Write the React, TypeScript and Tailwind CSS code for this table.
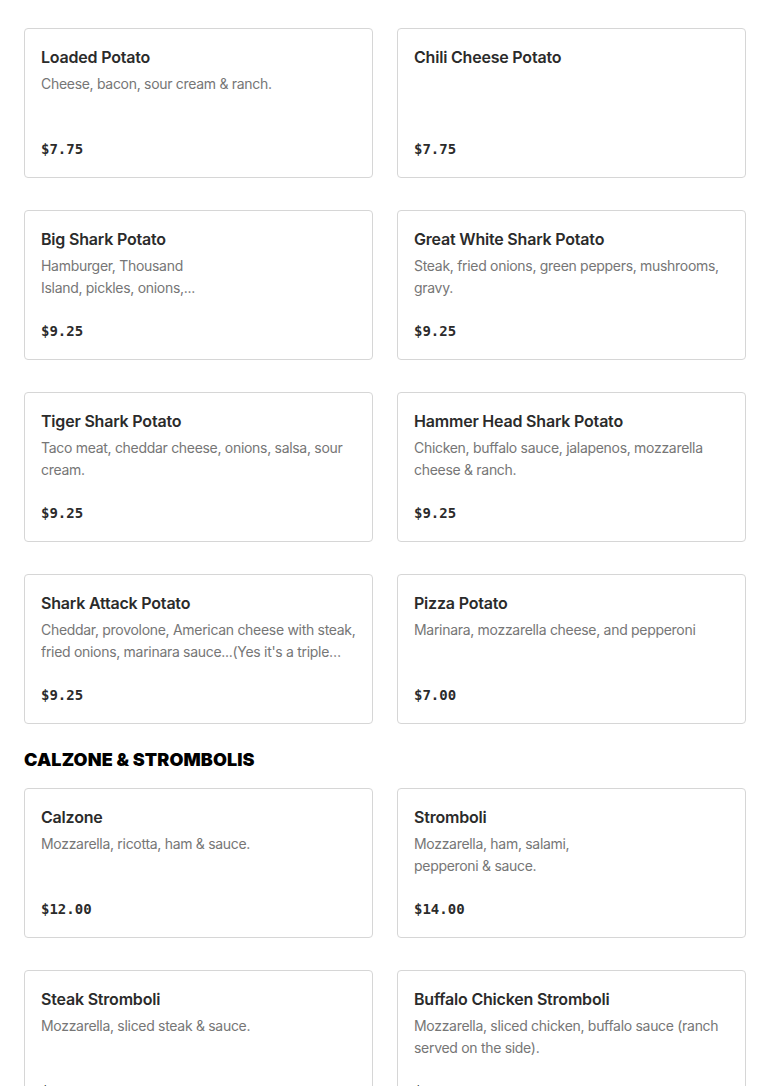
import React from 'react';

interface Item {
  name: string;
  desc: React.ReactNode;
  price: string;
}

const potatoes: Item[] = [
  { name: 'Loaded Potato', desc: 'Cheese, bacon, sour cream & ranch.', price: '$7.75' },
  { name: 'Chili Cheese Potato', desc: '', price: '$7.75' },
  {
    name: 'Big Shark Potato',
    desc: (
      <>
        Hamburger, Thousand
        <br />
        Island, pickles, onions,...
      </>
    ),
    price: '$9.25',
  },
  { name: 'Great White Shark Potato', desc: 'Steak, fried onions, green peppers, mushrooms, gravy.', price: '$9.25' },
  { name: 'Tiger Shark Potato', desc: 'Taco meat, cheddar cheese, onions, salsa, sour cream.', price: '$9.25' },
  { name: 'Hammer Head Shark Potato', desc: 'Chicken, buffalo sauce, jalapenos, mozzarella cheese & ranch.', price: '$9.25' },
  {
    name: 'Shark Attack Potato',
    desc: "Cheddar, provolone, American cheese with steak, fried onions, marinara sauce...(Yes it's a triple cheese stack) with extra steak.",
    price: '$9.25',
  },
  { name: 'Pizza Potato', desc: 'Marinara, mozzarella cheese, and pepperoni', price: '$7.00' },
];

const calzones: Item[] = [
  { name: 'Calzone', desc: 'Mozzarella, ricotta, ham & sauce.', price: '$12.00' },
  {
    name: 'Stromboli',
    desc: (
      <>
        Mozzarella, ham, salami,
        <br />
        pepperoni & sauce.
      </>
    ),
    price: '$14.00',
  },
  { name: 'Steak Stromboli', desc: 'Mozzarella, sliced steak & sauce.', price: '$13.00' },
  { name: 'Buffalo Chicken Stromboli', desc: 'Mozzarella, sliced chicken, buffalo sauce (ranch served on the side).', price: '$14.00' },
];

const MenuCard: React.FC<{ item: Item }> = ({ item }) => (
  <div className="h-[150px] border border-[#d6d6d6] rounded-[4px] bg-white px-4 pt-4 pb-[18px] flex flex-col">
    <h3 className="text-[16px] leading-6 font-semibold text-[#2b2b2b] tracking-[-0.2px]">{item.name}</h3>
    <p className="mt-1 text-[14px] leading-[22px] text-[#767676] tracking-[-0.3px] h-[44px] line-clamp-2">{item.desc}</p>
    <div className="mt-auto text-[14px] leading-5 font-bold text-[#2b2b2b] font-['DejaVu_Sans_Mono',monospace]">
      {item.price}
    </div>
  </div>
);

export default function App() {
  return (
    <div className="min-h-screen bg-white px-6 pt-7 font-['Inter',sans-serif]">
      <div className="grid grid-cols-2 gap-x-6 gap-y-8">
        {potatoes.map((item) => (
          <MenuCard key={item.name} item={item} />
        ))}
      </div>
      <h2 className="mt-[22px] mb-[14px] text-[18px] leading-7 font-black text-black tracking-[0.1px]">
        CALZONE &amp; STROMBOLIS
      </h2>
      <div className="grid grid-cols-2 gap-x-6 gap-y-8">
        {calzones.map((item) => (
          <MenuCard key={item.name} item={item} />
        ))}
      </div>
    </div>
  );
}
